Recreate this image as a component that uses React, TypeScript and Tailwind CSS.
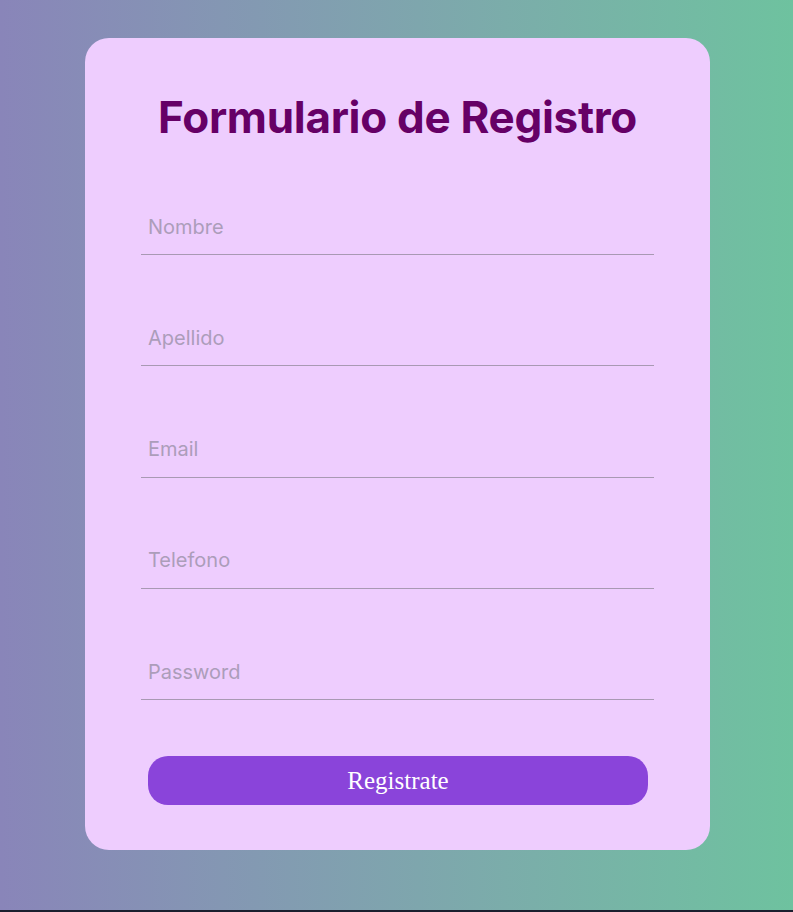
import React from "react";

const fields = ["Nombre", "Apellido", "Email", "Telefono", "Password"];

export default function App() {
  return (
    <div className="flex flex-col w-full">
      <div className="h-[910px] w-full bg-gradient-to-r from-[#8985b9] to-[#6ec29f] pt-[38px]">
        <div className="ml-[85px] w-[625px] h-[812px] rounded-[24px] bg-[#eecdfe] flex flex-col pt-[51px]">
          <h1 className="text-center text-[44px] leading-[56px] font-bold text-[#660066] font-['Inter',sans-serif] tracking-[-0.3px]">
            Formulario de Registro
          </h1>
          <form className="flex flex-col mt-[54px]">
            {fields.map((f) => (
              <input
                key={f}
                type={f === "Password" ? "password" : "text"}
                placeholder={f}
                className="ml-[56px] w-[513px] h-[56px] mb-[55.3px] border-b border-[#a899b3] bg-transparent pl-[7px] text-[20px] font-['Inter',sans-serif] outline-none placeholder:text-[#ac9dba]"
              />
            ))}
            <button
              type="button"
              className="ml-[63px] mt-[1px] w-[500px] h-[49px] rounded-[20px] bg-[#8a44da] text-white text-[25px] font-['Liberation_Serif',serif]"
            >
              Registrate
            </button>
          </form>
        </div>
      </div>
      <div className="h-[2px] w-full bg-[#1b1f2e]" />
    </div>
  );
}
